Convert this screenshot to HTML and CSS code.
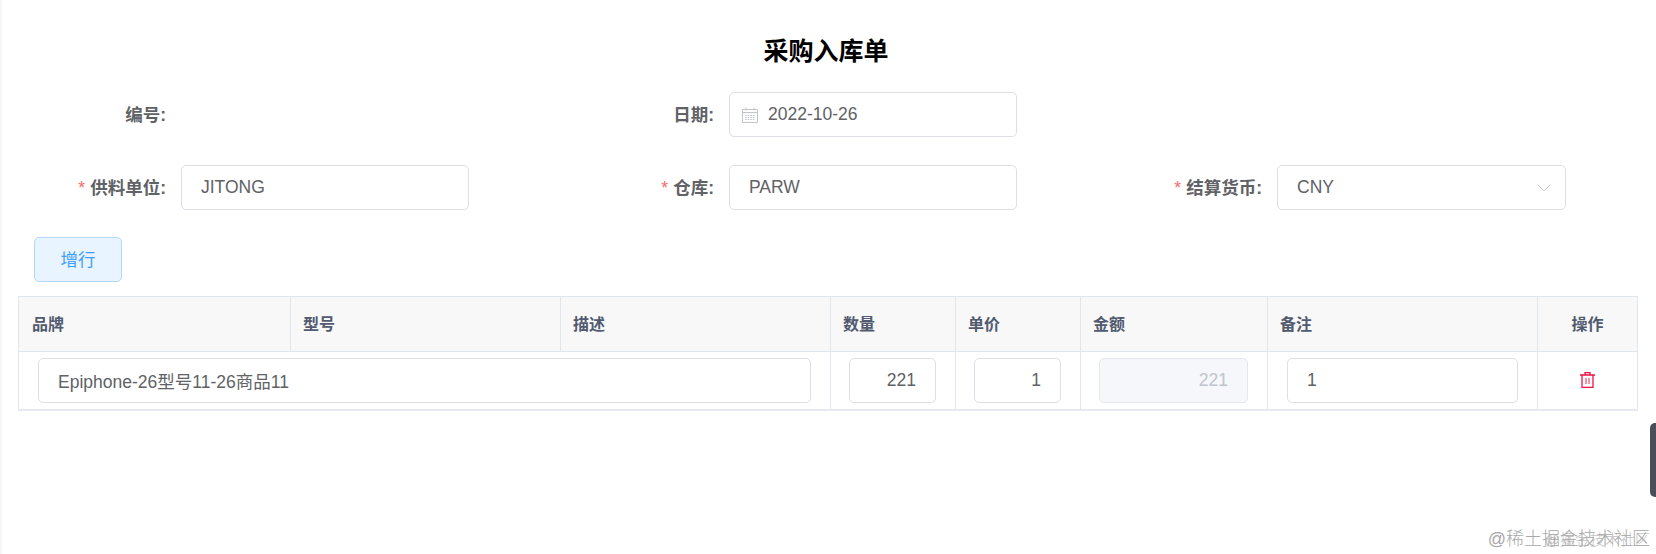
FILE: index.html
```html
<!DOCTYPE html>
<html lang="zh-CN">
<head>
<meta charset="utf-8">
<title>采购入库单</title>
<link rel="stylesheet" href="styles.css">
</head>
<body>
<main class="page">
  <h1 class="title">采购入库单</h1>
  <section class="form">
    <div class="field"><label class="label">编号:</label></div>
    <div class="field">
      <label class="label">日期:</label>
      <div class="control with-icon">
        <svg class="cal" viewBox="0 0 16 16" fill="none" stroke="#c0c4cc" stroke-width="1"><path d="M.5 2.5h15v13H.5zM.5 5.5h15M4 .5v3M12 .5v3"/><path stroke-dasharray="1.6 1" d="M3 8.5h10M3 10.5h10M3 12.5h10"/></svg>
        <span>2022-10-26</span>
      </div>
    </div>
    <div class="field"></div>
    <div class="field"><label class="label"><i class="req">*</i>供料单位:</label><div class="control">JITONG</div></div>
    <div class="field"><label class="label"><i class="req">*</i>仓库:</label><div class="control">PARW</div></div>
    <div class="field">
      <label class="label"><i class="req">*</i>结算货币:</label>
      <div class="control select">
        <span>CNY</span>
        <svg class="chev" viewBox="0 0 14 8" fill="none" stroke="#c0c4cc" stroke-width="1"><path d="M1 1l6 6 6-6"/></svg>
      </div>
    </div>
  </section>
  <button class="add" type="button">增行</button>
  <table class="grid">
    <colgroup>
      <col class="c1"><col class="c2"><col class="c3"><col class="c4"><col class="c5"><col class="c6"><col class="c7"><col class="c8">
    </colgroup>
    <thead>
      <tr><th class="first">品牌</th><th>型号</th><th>描述</th><th>数量</th><th>单价</th><th>金额</th><th>备注</th><th class="center">操作</th></tr>
    </thead>
    <tbody>
      <tr>
        <td colspan="3"><div class="control">Epiphone-26型号11-26商品11</div></td>
        <td class="num-cell"><div class="control num">221</div></td>
        <td class="num-cell"><div class="control num">1</div></td>
        <td class="num-cell"><div class="control num disabled">221</div></td>
        <td><div class="control">1</div></td>
        <td class="center">
          <svg class="trash" viewBox="0 0 15 16" fill="none" stroke="#ee1144" stroke-width="1.3"><path d="M0 3h15M5 3V.7h5V3M2 3v12.3h11V3"/><path stroke="#f0708c" stroke-width="1.5" d="M6 6v6M9 6v6"/></svg>
        </td>
      </tr>
    </tbody>
  </table>
</main>
<div class="side-tab"></div>
<div class="mark mark-a">@稀土掘金技术社区</div>
<div class="mark mark-b">@掘金技术社区</div>
</body>
</html>
```

FILE: styles.css
```css
* { box-sizing: border-box; }
html, body { margin: 0; height: 100%; overflow: hidden; background: #fff; }
body {
  font-family: "Liberation Sans", "Noto Sans CJK SC", sans-serif;
  color: #606266;
  border-left: 2px solid #f6f6f6;
}
.page { padding: 36px 0 0 15px; }
.title {
  margin: 0;
  height: 30px;
  line-height: 30px;
  font-size: 25px;
  font-weight: 700;
  color: #000;
  text-align: center;
  padding-right: 21px;
}
.form {
  display: grid;
  grid-template-columns: repeat(3, 548px);
  grid-auto-rows: 45px;
  row-gap: 28px;
  margin-top: 26px;
}
.field { display: flex; align-items: center; }
.label {
  width: 149px;
  margin-right: 15px;
  padding-bottom: 2px;
  text-align: right;
  font-size: 17.5px;
  font-weight: 700;
  color: #606266;
}
.req {
  font-style: normal;
  font-weight: 400;
  color: #f56c6c;
  margin-right: 5px;
}
.control {
  display: flex;
  align-items: center;
  height: 45px;
  padding: 0 18px;
  border: 1px solid #dcdfe6;
  border-radius: 5px;
  background: #fff;
  font-size: 17.5px;
  color: #606266;
  white-space: nowrap;
}
.field .control { width: 288px; padding-left: 19px; }
.field .with-icon { padding-left: 12px; }
.cal { width: 16px; height: 16px; margin-right: 10px; flex: none; }
.field .select { width: 289px; justify-content: space-between; padding-right: 14px; }
.chev { width: 14px; height: 8px; }
.add {
  display: block;
  width: 88px;
  height: 45px;
  margin: 27px 0 0 17px;
  padding: 0 0 2px;
  border: 1px solid #b3d8ff;
  border-radius: 5px;
  background: #e8f4ff;
  color: #409eff;
  font: 17.5px "Liberation Sans", "Noto Sans CJK SC", sans-serif;
}
.grid {
  width: 1619px;
  margin: 14px 0 0 1px;
  table-layout: fixed;
  border-collapse: collapse;
  border: 1px solid #dfe6ec;
  border-bottom: 2px solid #e6e9f2;
}
.c1 { width: 272px; }
.c2, .c3, .c7 { width: 270px; }
.c4, .c5 { width: 125px; }
.c6 { width: 187px; }
.c8 { width: 100px; }
th, td { border: 1px solid #dfe6ec; padding: 0; }
th {
  height: 55px;
  padding: 0 0 3px 12px;
  background: #f8f8f9;
  text-align: left;
  font-size: 16px;
  font-weight: 700;
  color: #515a6e;
}
th.first { padding-left: 13px; }
th.center { padding-left: 0; }
.center { text-align: center; }
td { height: 58px; padding: 0 19px; }
td.num-cell { padding-left: 18px; }
td.center { padding: 0; }
td .control { width: 100%; padding: 0 19px; }
.num { justify-content: flex-end; }
.disabled { background: #f5f7fa; border-color: #e4e7ed; color: #c0c4cc; }
.trash { display: block; width: 15px; height: 16px; margin: 0 auto; }
.side-tab {
  position: absolute;
  right: 0;
  top: 423px;
  width: 6px;
  height: 74px;
  border-radius: 5px 0 0 5px;
  background: #4b4e5a;
}
.mark {
  position: absolute;
  right: 6px;
  color: #a8a8a8;
  font-weight: 300;
  white-space: nowrap;
}
.mark-a { top: 529px; font-size: 18px; line-height: 20px; }
.mark-b { top: 531px; font-size: 15px; line-height: 18px; opacity: .7; }
```
